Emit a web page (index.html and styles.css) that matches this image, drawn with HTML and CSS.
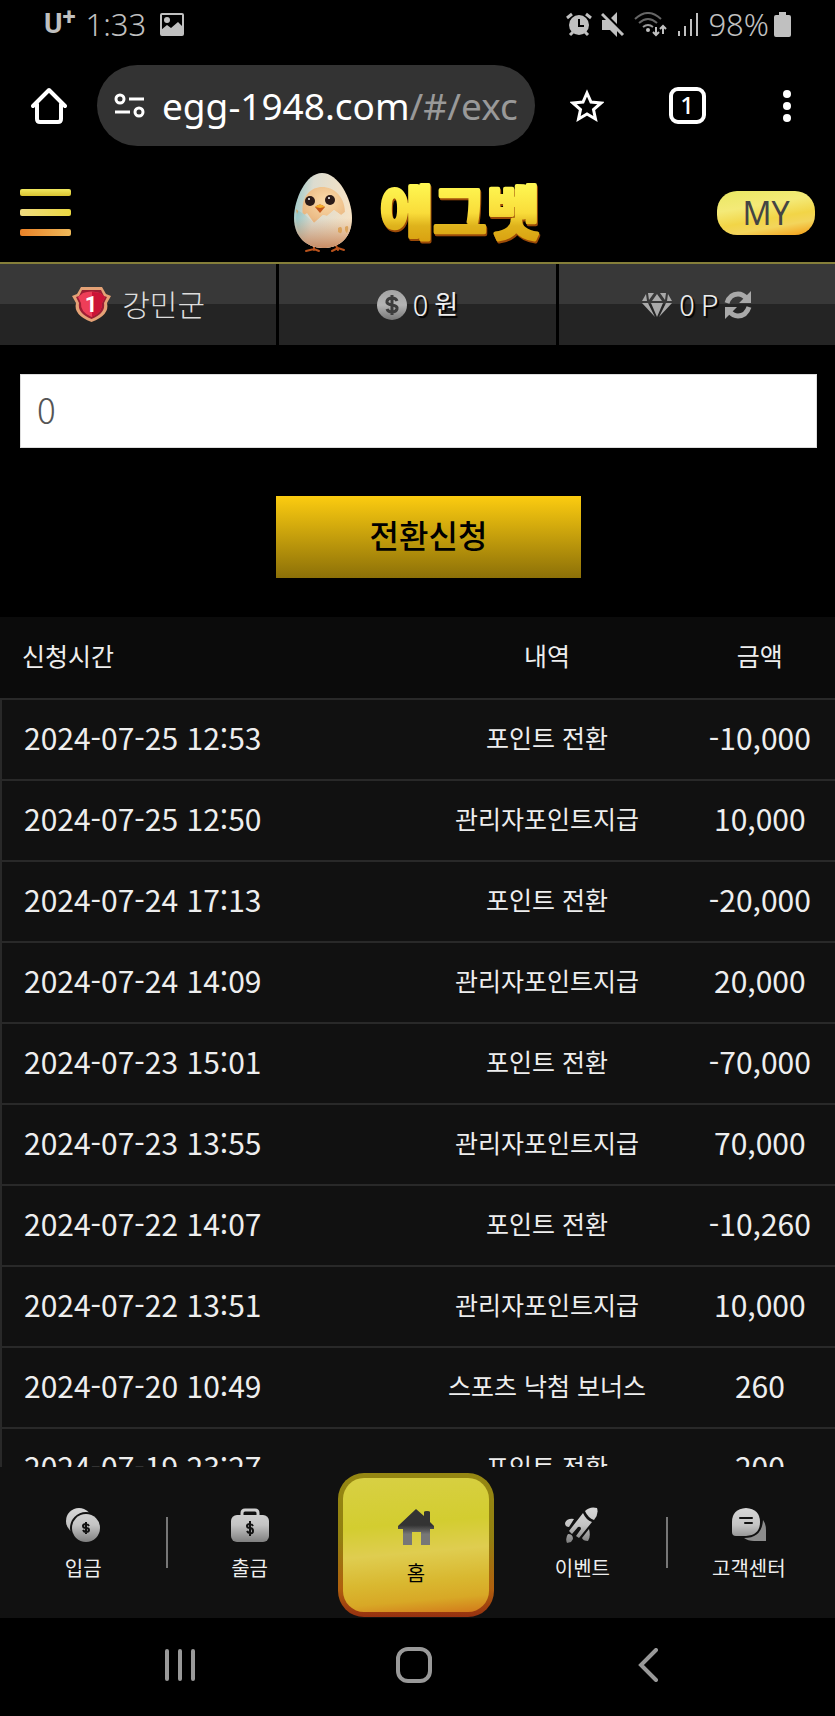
FILE: index.html
```
<!DOCTYPE html>
<html lang="ko">

<head>
    <meta charset="UTF-8">
    <meta name="viewport" content="width=device-width, initial-scale=1.0">
    <title>에그벳</title>
    <link rel="stylesheet" href="styles.css">
</head>

<body>
    <!-- shared gradients -->
    <svg class="defs" width="0" height="0" aria-hidden="true">
        <defs>
            <linearGradient id="silver" x1="0" y1="0" x2="0" y2="36" gradientUnits="userSpaceOnUse">
                <stop offset="0" stop-color="#d8d8d8" />
                <stop offset="0.5" stop-color="#c4c4c4" />
                <stop offset="1" stop-color="#7c7c7c" />
            </linearGradient>
            <linearGradient id="coin" x1="0" y1="0" x2="0" y2="1">
                <stop offset="0" stop-color="#a4a4a4" />
                <stop offset="0.5" stop-color="#b4b4b4" />
                <stop offset="1" stop-color="#777" />
            </linearGradient>
            <linearGradient id="dark" x1="0" y1="0" x2="0" y2="1">
                <stop offset="0.45" stop-color="#333" />
                <stop offset="0.7" stop-color="#777" />
            </linearGradient>
            <linearGradient id="gold" x1="0" y1="0" x2="0" y2="1">
                <stop offset="0.15" stop-color="#fffb55" />
                <stop offset="0.55" stop-color="#f9dc3a" />
                <stop offset="0.7" stop-color="#dfb31c" />
                <stop offset="0.9" stop-color="#d9a010" />
            </linearGradient>
            <linearGradient id="shell" x1="0" y1="0" x2="1" y2="0.2">
                <stop offset="0" stop-color="#8fc4c6" />
                <stop offset="0.35" stop-color="#dcdcd0" />
                <stop offset="1" stop-color="#f6e2c4" />
            </linearGradient>
            <linearGradient id="shade" x1="0" y1="0" x2="0" y2="1">
                <stop offset="0.6" stop-color="#c98a5c" stop-opacity="0" />
                <stop offset="1" stop-color="#c0764a" stop-opacity="0.8" />
            </linearGradient>
            <radialGradient id="face" cx="0.55" cy="0.4" r="0.6">
                <stop offset="0" stop-color="#fbdcab" />
                <stop offset="1" stop-color="#eab882" />
            </radialGradient>
        </defs>
    </svg>

    <div class="status-bar">
        <div class="status-left">
            <span class="carrier">U<sup>+</sup></span>
            <span>1:33</span>
            <svg class="picture" width="24" height="23" viewBox="0 0 24 23">
                <rect x="1" y="1" width="22" height="21" rx="1" fill="none" stroke="#c0c0c0" stroke-width="2" />
                <circle cx="7" cy="7" r="3" fill="#c0c0c0" />
                <path d="M1 17l6-5 4 3 7-6 5 5v8H1z" fill="#c0c0c0" />
            </svg>
        </div>
        <div class="status-right">
            <svg width="26" height="25" viewBox="0 0 26 25">
                <circle cx="13" cy="13" r="10" fill="#c0c0c0" />
                <path d="M1 6l5-4M25 6l-5-4M4 23l3-3M22 23l-3-3" stroke="#c0c0c0" stroke-width="3" />
                <path d="M13 7v7h5" fill="none" stroke="#000" stroke-width="2" />
            </svg>
            <svg width="24" height="25" viewBox="0 0 24 25">
                <path d="M1 8h5l10 10v7l-7-7H1zM16 0v12l-6-6z" fill="#c0c0c0" />
                <path d="M1 2l21 21" stroke="#c0c0c0" stroke-width="3" />
            </svg>
            <svg width="34" height="25" viewBox="0 0 34 25">
                <g fill="none" stroke="#666" stroke-width="2">
                    <path d="M1 7q13-12 26 0" />
                    <path d="M5 11q9-8 18 0" />
                    <path d="M9 15q5-4 10 0" stroke="#999" />
                </g>
                <circle cx="14" cy="18" r="2" fill="#c0c0c0" />
                <path d="M22 15v8M19 20l3 3 3-3M29 22v-8M26 17l3-3 3 3" fill="none" stroke="#c0c0c0" stroke-width="2" />
            </svg>
            <svg width="22" height="25" viewBox="0 0 22 25">
                <path d="M2 19v5M8 14v10M14 7v17M20 1v23" stroke="#c0c0c0" stroke-width="2" />
            </svg>
            <span>98%</span>
            <svg width="17" height="25" viewBox="0 0 17 25">
                <path d="M5 0h7v3h3q2 0 2 2v18q0 2-2 2H2q-2 0-2-2V5q0-2 2-2h3z" fill="#c0c0c0" />
            </svg>
        </div>
    </div>

    <div class="browser-bar">
        <button class="browser-home" aria-label="Home">
            <svg width="36" height="37" viewBox="0 0 36 37">
                <path d="M2 19L18 3l16 16M6 17v15q0 3 3 3h18q3 0 3-3V17" fill="none" stroke="#fff" stroke-width="4" stroke-linejoin="round" stroke-linecap="round" />
            </svg>
        </button>
        <button class="address">
            <svg width="31" height="26" viewBox="0 0 31 26">
                <g fill="none" stroke="#fff" stroke-width="3">
                    <circle cx="6" cy="6" r="4" />
                    <circle cx="25" cy="19" r="4" />
                    <path d="M15 6h15M1 19h15" />
                </g>
            </svg>
            <span>egg-1948.com<span class="path">/#/exc</span></span>
        </button>
        <button class="browser-action" aria-label="Bookmark">
            <svg width="34" height="33" viewBox="0 0 34 33">
                <path d="M17 4l4 9 10 1-7.500 6.500 2 9.500-8.500-5-8.500 5 2-9.500L3 14l10-1z" fill="none" stroke="#fff" stroke-width="3" />
            </svg>
        </button>
        <button class="browser-action" aria-label="Tabs"><span class="tab-count">1</span></button>
        <button class="browser-action" aria-label="Menu">
            <svg width="10" height="34" viewBox="0 0 10 34">
                <g fill="#fff">
                    <circle cx="5" cy="5" r="4" />
                    <circle cx="5" cy="17" r="4" />
                    <circle cx="5" cy="29" r="4" />
                </g>
            </svg>
        </button>
    </div>

    <header class="site-header">
        <button class="menu-btn" aria-label="메뉴">
            <span class="bar bar-1"></span>
            <span class="bar bar-2"></span>
            <span class="bar bar-3"></span>
        </button>
        <a href="#/" class="logo">
            <svg width="60" height="80" viewBox="0 0 60 80">
                <path d="M21 70v7m-8 1l8-2 5 2M42 70l3 7m-6 1l6-3 6 2" fill="none" stroke="#b8521c" stroke-width="2" stroke-linecap="round" />
                <path d="M29 0C45 0 59 25 59 45S46 75 30 75 1 64 1 45 13 0 29 0z" fill="url(#shell)" />
                <path d="M10 43C7 22 19 14 29 14c12 0 24 10 23 28l-4 0-7-5-7 6-4-1-9 8-7-10z" fill="url(#face)" />
                <path d="M4 37l7 4 10 9 9-8 4 1 7-6 7 5 5-4 5 5c2 20-10 32-28 32S0 61 4 37z" fill="url(#shell)" />
                <path d="M29 0C45 0 59 25 59 45S46 75 30 75 1 64 1 45 13 0 29 0z" fill="url(#shade)" />
                <circle cx="17" cy="28" r="5" fill="#2a1a18" />
                <circle cx="37" cy="27" r="5" fill="#2a1a18" />
                <circle cx="16" cy="26" r="1" fill="#fff" />
                <circle cx="36" cy="25" r="1" fill="#fff" />
                <path d="M22 34q5-5 10 0l-5 6z" fill="#c4571b" />
                <path d="M22 34q5-5 10 0l-5 1z" fill="#f6b02c" />
                <path d="M3 36l2 2-1 3zM54 34l3 3M45 55q4-3 4 2t-4 2zM52 54q4-3 3 3t-3 0z" fill="#dba35c" />
            </svg>
            <svg class="logo-text" width="166" height="96" viewBox="0 0 166 96">
                <text x="3" y="69" fill="url(#gold)" stroke="url(#gold)" stroke-width="4" stroke-linejoin="round">에그벳</text>
            </svg>
        </a>
        <button class="my-btn">MY</button>
    </header>

    <div class="user-bar">
        <div class="user-cell user-name">
            <svg width="41" height="37" viewBox="0 0 41 37">
                <path d="M10 1h21l4 7 5 2-4 7q3 12-15.500 19Q2 29 5 17L1 10l5-2z" fill="#e5a276" />
                <path d="M11 4h19l3 6 3 1-3 6q2 10-12.500 16Q6 27 8 17l-3-6 3-1z" fill="#9c1f34" />
                <path d="M12 7q8-3 17 0l5 4-3 6q1 9-10.500 14Q9 26 10 17l-3-6z" fill="#ee3e58" />
                <path d="M21 6q4 0 8 1l5 4-3 6q1 9-10 14z" fill="#cc1436" />
                <text x="20" y="26" class="level">1</text>
            </svg>
            <span>강민군</span>
        </div>
        <div class="user-cell">
            <svg width="30" height="32" viewBox="0 0 30 32">
                <circle cx="15" cy="16" r="15" fill="url(#coin)" />
                <path d="M20 12q-1-3-5-3t-5 3 5 4 5 4-5 3-5-3M15 6v20" fill="none" stroke="#3c3c3c" stroke-width="3" />
            </svg>
            <span class="num">0</span>
            <span class="unit">원</span>
        </div>
        <div class="user-cell">
            <svg width="32" height="26" viewBox="0 0 32 26">
                <g fill="#a9a9a9">
                    <path d="M7 1h6l-5 7zM16 2l5 7H11zM19 1h6l-1 7zM5 2l1 7H1zM27 2l4 7h-5z" />
                    <path d="M1 11h6l7 14zM10 11h12l-6 14zM25 11h6L18 25z" />
                </g>
            </svg>
            <span class="num">0</span>
            <span class="num">P</span>
            <button class="refresh" aria-label="새로고침">
                <svg width="28" height="30" viewBox="0 0 28 30">
                    <path d="M3 13q3-9 11-9 5 0 9 5M25 17q-3 9-11 9-5 0-9-5" fill="none" stroke="#a9a9a9" stroke-width="5" />
                    <path d="M27 1v12H15zM1 29V17h12z" fill="#a9a9a9" />
                </svg>
            </button>
        </div>
    </div>

    <main class="content">
        <form class="exchange-form">
            <input type="text" class="amount" value="0" aria-label="전환 포인트">
            <div class="submit-row">
                <button type="button" class="submit-btn">전환신청</button>
            </div>
        </form>

        <table class="history">
            <thead>
                <tr><th class="date">신청시간</th><th class="detail">내역</th><th class="price">금액</th></tr>
            </thead>
            <tbody>
                <tr><td class="date">2024-07-25 12:53</td><td>포인트 전환</td><td class="price">-10,000</td></tr>
                <tr><td class="date">2024-07-25 12:50</td><td>관리자포인트지급</td><td class="price">10,000</td></tr>
                <tr><td class="date">2024-07-24 17:13</td><td>포인트 전환</td><td class="price">-20,000</td></tr>
                <tr><td class="date">2024-07-24 14:09</td><td>관리자포인트지급</td><td class="price">20,000</td></tr>
                <tr><td class="date">2024-07-23 15:01</td><td>포인트 전환</td><td class="price">-70,000</td></tr>
                <tr><td class="date">2024-07-23 13:55</td><td>관리자포인트지급</td><td class="price">70,000</td></tr>
                <tr><td class="date">2024-07-22 14:07</td><td>포인트 전환</td><td class="price">-10,260</td></tr>
                <tr><td class="date">2024-07-22 13:51</td><td>관리자포인트지급</td><td class="price">10,000</td></tr>
                <tr><td class="date">2024-07-20 10:49</td><td>스포츠 낙첨 보너스</td><td class="price">260</td></tr>
                <tr><td class="date">2024-07-19 23:27</td><td>포인트 전환</td><td class="price">200</td></tr>
            </tbody>
        </table>
    </main>

    <nav class="bottom-nav">
        <a href="#/deposit" class="nav-item divided">
            <svg width="36" height="36" viewBox="0 0 36 36">
                <circle cx="14" cy="14" r="13" fill="url(#silver)" />
                <circle cx="21" cy="21" r="16" fill="#111" />
                <circle cx="21" cy="21" r="14" fill="url(#silver)" />
                <path d="M24 19q-1-2-3-2-3 0-3 2t3 2 3 2-3 2q-2 0-3-2M21 15v12" fill="none" stroke="#111" stroke-width="2" />
            </svg>
            <span>입금</span>
        </a>
        <a href="#/withdraw" class="nav-item">
            <svg width="38" height="36" viewBox="0 0 38 36">
                <path d="M11 9V6q0-3 3-3h10q3 0 3 3v3" fill="none" stroke="#cfcfcf" stroke-width="3" />
                <rect x="0" y="8" width="38" height="27" rx="6" fill="url(#silver)" />
                <path d="M22 19q-1-2-3-2-3 0-3 2t3 2 3 3-3 2q-2 0-3-2M19 14v15" fill="none" stroke="#111" stroke-width="2" />
            </svg>
            <span>출금</span>
        </a>
        <a href="#/" class="nav-item nav-home">
            <svg width="36" height="36" viewBox="0 0 36 36">
                <path d="M18 0l8 7V3q0-1 3-1 3 0 3 1v10l4 4v3h-4v16h-9V23h-9v13H5V20H0v-3z" fill="url(#dark)" />
            </svg>
            <span>홈</span>
        </a>
        <a href="#/event" class="nav-item divided">
            <svg width="34" height="36" viewBox="0 0 34 36">
                <g fill="url(#silver)">
                    <path d="M20 4q5-5 12-3 2 6-3 12-6-2-9-9z" />
                    <path d="M18 6q3 7 9 9L14 31l-3-2 5-7q0-3-3-2l-6 7-3-3z" />
                    <path d="M0 16q2-5 9-4l-5 8q-4 0-4-4zM24 22q2 8-1 12-5 0-6-3zM3 27q5 0 5 5l-2 3-4 1q-2-5 1-9z" />
                </g>
            </svg>
            <span>이벤트</span>
        </a>
        <a href="#/support" class="nav-item">
            <svg width="34" height="36" viewBox="0 0 34 36">
                <path d="M31 13q3 4 3 10v11H22q-6 0-10-3 18 0 19-18z" fill="#8c8c8c" />
                <path d="M14 1q14 1 14 14t-14 14H4q-4 0-4-4V15Q0 2 14 1z" fill="url(#silver)" />
                <path d="M8 11h12M13 16h7" stroke="#111" stroke-width="2" stroke-linecap="round" />
            </svg>
            <span>고객센터</span>
        </a>
    </nav>

    <div class="system-nav">
        <button aria-label="Recents">
            <svg width="32" height="34" viewBox="0 0 32 34">
                <path d="M3 3v28M16 3v28M29 3v28" stroke="#999" stroke-width="4" stroke-linecap="round" />
            </svg>
        </button>
        <button aria-label="Home">
            <svg width="36" height="36" viewBox="0 0 36 36">
                <rect x="2" y="2" width="32" height="32" rx="10" fill="none" stroke="#999" stroke-width="4" />
            </svg>
        </button>
        <button aria-label="Back">
            <svg width="20" height="34" viewBox="0 0 20 34">
                <path d="M18 2L3 17l15 15" fill="none" stroke="#999" stroke-width="4" stroke-linecap="round" />
            </svg>
        </button>
    </div>
</body>

</html>
```
FILE: styles.css
```
* {
    box-sizing: border-box;
}

body {
    margin: 0;
    height: 100vh;
    display: flex;
    flex-direction: column;
    background: #000;
    color: #eee;
    font-family: "Noto Sans CJK KR", sans-serif;
    font-weight: 400;
}

button {
    padding: 0;
    border: 0;
    background: none;
    color: inherit;
    font: inherit;
}

a {
    color: inherit;
    text-decoration: none;
}

svg {
    display: block;
    flex-shrink: 0;
}

.defs {
    position: absolute;
}

/* phone status bar */
.status-bar {
    flex: none;
    height: 48px;
    padding: 0 44px;
    display: flex;
    justify-content: space-between;
    align-items: center;
    color: #c0c0c0;
    font-family: "Noto Sans", sans-serif;
    font-weight: 300;
    font-size: 31px;
    line-height: 48px;
}

.status-left,
.status-right {
    display: flex;
    align-items: center;
    gap: 10px;
}

.status-right {
    gap: 9px;
}

.picture {
    margin-left: 4px;
}

.status-right svg:last-child {
    margin-left: -4px;
}

.carrier {
    font-family: Roboto, sans-serif;
    font-weight: 700;
    font-size: 28px;
}

.carrier sup {
    font-size: 24px;
    line-height: 0;
    vertical-align: 8px;
}

/* browser bar */
.browser-bar {
    flex: none;
    height: 112px;
    padding-top: 3px;
    display: flex;
    align-items: center;
}

.browser-home,
.browser-action {
    width: 100px;
    height: 80px;
    padding-left: 4px;
    display: flex;
    justify-content: center;
    align-items: center;
}

.browser-home {
    width: 97px;
    padding: 0;
}

.address {
    flex: 1;
    min-width: 0;
    height: 81px;
    padding: 0 17px;
    display: flex;
    align-items: center;
    gap: 17px;
    overflow: hidden;
    border-radius: 41px;
    background: #333;
    color: #fff;
    font-family: "Noto Sans", sans-serif;
    font-size: 37px;
    white-space: nowrap;
}

.path {
    color: #999;
}

.tab-count {
    width: 37px;
    height: 37px;
    border: 4px solid #fff;
    border-radius: 9px;
    color: #fff;
    font-family: "Noto Sans", sans-serif;
    font-weight: 500;
    font-size: 24px;
    line-height: 28px;
    text-align: center;
}

/* site header */
.site-header {
    flex: none;
    height: 104px;
    padding: 3px 20px 0;
    display: grid;
    grid-template-columns: 1fr auto 1fr;
    align-items: center;
    border-bottom: 2px solid #857f3a;
}

.menu-btn {
    width: 51px;
    display: flex;
    flex-direction: column;
    gap: 13px;
}

.bar {
    height: 7px;
    border-radius: 2px;
}

.bar-1 {
    background: linear-gradient(#f0e860, #d8c230);
}

.bar-2 {
    background: linear-gradient(90deg, #f0dc80, #ead842);
}

.bar-3 {
    background: linear-gradient(90deg, #ea8228, #eeb95a);
}

.logo {
    display: flex;
    align-items: center;
    gap: 24px;
}

.logo-text {
    font-weight: 700;
    font-size: 58px;
    filter: drop-shadow(1px 2px 0 #9c4a08);
}

.my-btn {
    justify-self: end;
    width: 98px;
    height: 44px;
    border-radius: 20px;
    background: linear-gradient(170deg, #e9e862 0%, #f4ea78 35%, #f2d547 60%, #f3d55c 75%, #f39a12 100%);
    color: #444;
    font-family: "Noto Sans", sans-serif;
    font-size: 32px;
    line-height: 44px;
}

/* member info */
.user-bar {
    flex: none;
    display: grid;
    grid-template-columns: repeat(3, 1fr);
    gap: 3px;
}

.user-cell {
    height: 81px;
    display: flex;
    justify-content: center;
    align-items: center;
    gap: 6px;
    background: linear-gradient(#383838 50%, #242424 50%);
    line-height: 40px;
    text-shadow: 2px 2px 1px #000;
}

.user-cell span {
    padding-bottom: 4px;
}

.user-name {
    gap: 10px;
    color: #ddd;
    font-weight: 300;
    font-size: 30px;
    text-shadow: none;
}

.level {
    fill: #fff;
    font-family: Roboto, sans-serif;
    font-weight: 700;
    font-size: 22px;
    text-anchor: middle;
}

.num {
    font-weight: 300;
    font-size: 29px;
}

.unit {
    font-size: 26px;
}

/* point exchange */
.content {
    flex: 1;
    min-height: 0;
    overflow-y: auto;
    scrollbar-width: none;
}

.exchange-form {
    padding: 29px 18px 39px 20px;
}

.amount {
    display: block;
    width: 100%;
    height: 74px;
    padding: 0 16px 5px;
    border: 1px solid #ddd;
    border-radius: 0;
    background: #fff;
    color: #555;
    font: inherit;
    font-weight: 300;
    font-size: 35px;
}

.submit-row {
    margin-top: 48px;
    padding-left: 20px;
    display: flex;
    justify-content: center;
}

.submit-btn {
    width: 305px;
    height: 82px;
    padding-bottom: 7px;
    background: linear-gradient(#fccc10, #8c7008);
    color: #000;
    font-weight: 500;
    font-size: 32px;
}

.history {
    width: 100%;
    table-layout: fixed;
    border-spacing: 0;
    font-size: 25px;
    text-align: center;
}

.history th,
.history td {
    height: 81px;
    padding: 0 0 5px;
    white-space: nowrap;
}

.history th {
    background: #0b0b0b;
    font-weight: 400;
}

.history td {
    border-top: 2px solid #292929;
    background: #111;
}

.history .date {
    width: 49%;
    padding-left: 22px;
    text-align: left;
}

.history .price {
    width: 18%;
}

.history td.date,
.history td.price {
    font-size: 30px;
}

.history td.date {
    border-left: 2px solid #292929;
}

/* bottom menu */
.bottom-nav {
    flex: none;
    height: 151px;
    padding: 4px 3px 0 0;
    display: grid;
    grid-template-columns: repeat(5, 1fr);
    align-items: center;
    background: #111;
}

.nav-item {
    position: relative;
    display: flex;
    flex-direction: column;
    align-items: center;
    gap: 11px;
    font-size: 20px;
    line-height: 28px;
}

.divided::after {
    content: "";
    position: absolute;
    top: 10px;
    right: -2px;
    width: 2px;
    height: 51px;
    background: #777;
}

.nav-home {
    height: 144px;
    margin: 0 5px;
    padding-top: 6px;
    justify-content: center;
    gap: 14px;
    border: 5px solid transparent;
    border-radius: 26px;
    background:
        linear-gradient(175deg, #d8d044 0%, #d3cd30 35%, #dfcd50 55%, #d9b830 75%, #d8a826 88%, #d2781a 100%) padding-box,
        linear-gradient(#958712 0%, #928010 45%, #b0600e 80%, #963010 100%) border-box;
    color: #000;
}

/* phone navigation */
.system-nav {
    flex: none;
    height: 98px;
    padding: 0 70px 4px 63px;
    display: grid;
    grid-template-columns: repeat(3, 1fr);
    align-items: center;
}

.system-nav button {
    display: flex;
    justify-content: center;
}
```
